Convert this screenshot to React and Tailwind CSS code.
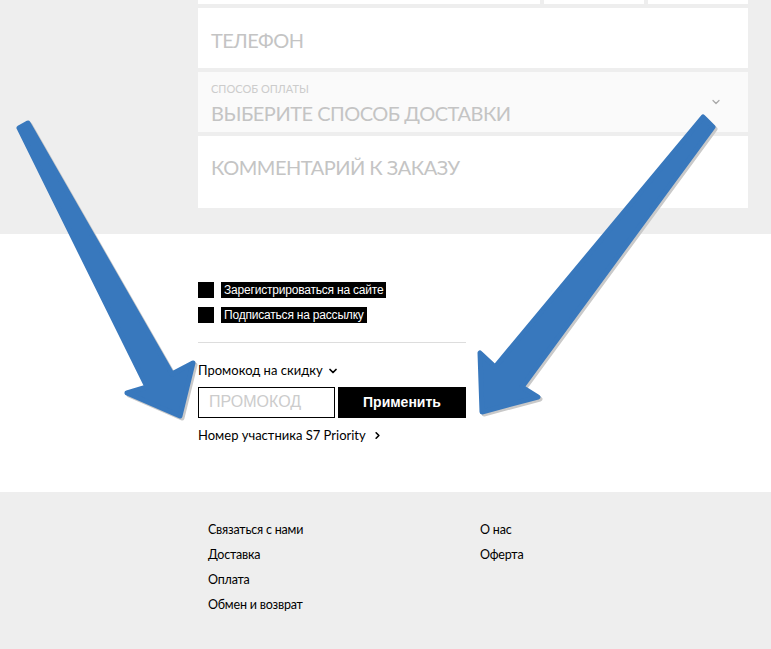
import { ChevronDown, ChevronRight } from 'lucide-react';

const fieldFont = { fontFamily: 'Lato, "Open Sans", sans-serif' };

function Arrows() {
  // two blue pointer arrows drawn over the page
  return (
    <svg className="absolute inset-0 pointer-events-none" width="771" height="649" viewBox="0 0 771 649">
      <g transform="translate(2,2)" fill="#c9c9c9" stroke="#c9c9c9" strokeWidth="5" strokeLinejoin="round">
        <path d="M19,128 L147,387 L127,393 L180,416 L193,363 L172,374 L28,123 Z" />
        <path d="M703,117 L495,367 L480,353 L482,412 L538,397 L522,387 L713,127 Z" />
      </g>
      <g fill="#3878bd" stroke="#3878bd" strokeWidth="5" strokeLinejoin="round">
        <path d="M19,128 L147,387 L127,393 L180,416 L193,363 L172,374 L28,123 Z" />
        <path d="M703,117 L495,367 L480,353 L482,412 L538,397 L522,387 L713,127 Z" />
      </g>
    </svg>
  );
}

function Check({ label }) {
  return (
    <div className="flex items-center gap-[7px] h-4">
      <span className="w-4 h-4 bg-black" />
      <span className="bg-black text-white text-[12px] leading-4 px-[3px] tracking-[-0.2px]" style={{ fontFamily: '"Liberation Sans", sans-serif' }}>
        {label}
      </span>
    </div>
  );
}

export default function App() {
  const footerLeft = ['Связаться с нами', 'Доставка', 'Оплата', 'Обмен и возврат'];
  const footerRight = ['О нас', 'Оферта'];

  return (
    <div className="relative w-[771px] h-[649px] overflow-hidden bg-white">
      {/* order form */}
      <section className="bg-[#eeeeee] h-[234px]">
        <div className="ml-[198px] w-[550px] flex flex-col gap-1" style={fieldFont}>
          <div className="flex gap-1 h-1">
            <div className="w-[342px] bg-white" />
            <div className="w-[100px] bg-white" />
            <div className="w-[100px] bg-white" />
          </div>
          <div className="h-[60px] bg-white flex items-center pl-[13px] pt-[3px] text-[20px] text-[#c4c4c4] tracking-[-0.5px]">
            ТЕЛЕФОН
          </div>
          <div className="relative h-[60px] bg-[#fafafa] pl-[13px] pt-[11px]">
            <div className="text-[11px] leading-3 text-[#cccccc]">СПОСОБ ОПЛАТЫ</div>
            <div className="text-[20px] leading-6 mt-[6px] text-[#c4c4c4] tracking-[-0.5px]">ВЫБЕРИТЕ СПОСОБ ДОСТАВКИ</div>
            <ChevronDown className="absolute right-[26px] top-[24px] text-[#a8a8a8]" size={12} strokeWidth={2.5} />
          </div>
          <div className="h-[72px] bg-white pl-[13px] pt-[19px] text-[20px] leading-6 text-[#c4c4c4] tracking-[-0.5px]">
            КОММЕНТАРИЙ К ЗАКАЗУ
          </div>
        </div>
      </section>

      {/* options and promo */}
      <section className="h-[258px] pt-[48px]">
        <div className="ml-[198px] w-[268px]">
          <div className="flex flex-col gap-[9px]">
            <Check label="Зарегистрироваться на сайте" />
            <Check label="Подписаться на рассылку" />
          </div>
          <div className="mt-[19px] border-t border-[#dddddd]" />
          <div className="mt-[18px] flex items-center gap-1 text-[13px] text-black" style={fieldFont}>
            Промокод на скидку
            <ChevronDown size={12} strokeWidth={3.5} />
          </div>
          <div className="mt-[6px] flex gap-[3px] h-[31px]">
            <div className="w-[137px] border border-black flex items-center pl-[10px] text-[16px] text-[#cccccc]" style={{ fontFamily: '"Liberation Sans", sans-serif' }}>
              ПРОМОКОД
            </div>
            <button className="flex-1 bg-black text-white text-[14px] font-bold" style={{ fontFamily: '"Liberation Sans", sans-serif' }}>
              Применить
            </button>
          </div>
          <div className="mt-[8px] flex items-center gap-[6px] text-[13px] text-black" style={fieldFont}>
            Номер участника S7 Priority
            <ChevronRight size={11} strokeWidth={3.5} />
          </div>
        </div>
      </section>

      {/* footer */}
      <footer className="bg-[#eeeeee] h-[157px] pt-[28px]" style={fieldFont}>
        <div className="ml-[208px] flex text-[12.5px] text-black tracking-[-0.2px]">
          <ul className="w-[272px] flex flex-col gap-[6px] leading-[19px]">
            {footerLeft.map((t) => <li key={t}>{t}</li>)}
          </ul>
          <ul className="flex flex-col gap-[6px] leading-[19px]">
            {footerRight.map((t) => <li key={t}>{t}</li>)}
          </ul>
        </div>
      </footer>

      <Arrows />
    </div>
  );
}
